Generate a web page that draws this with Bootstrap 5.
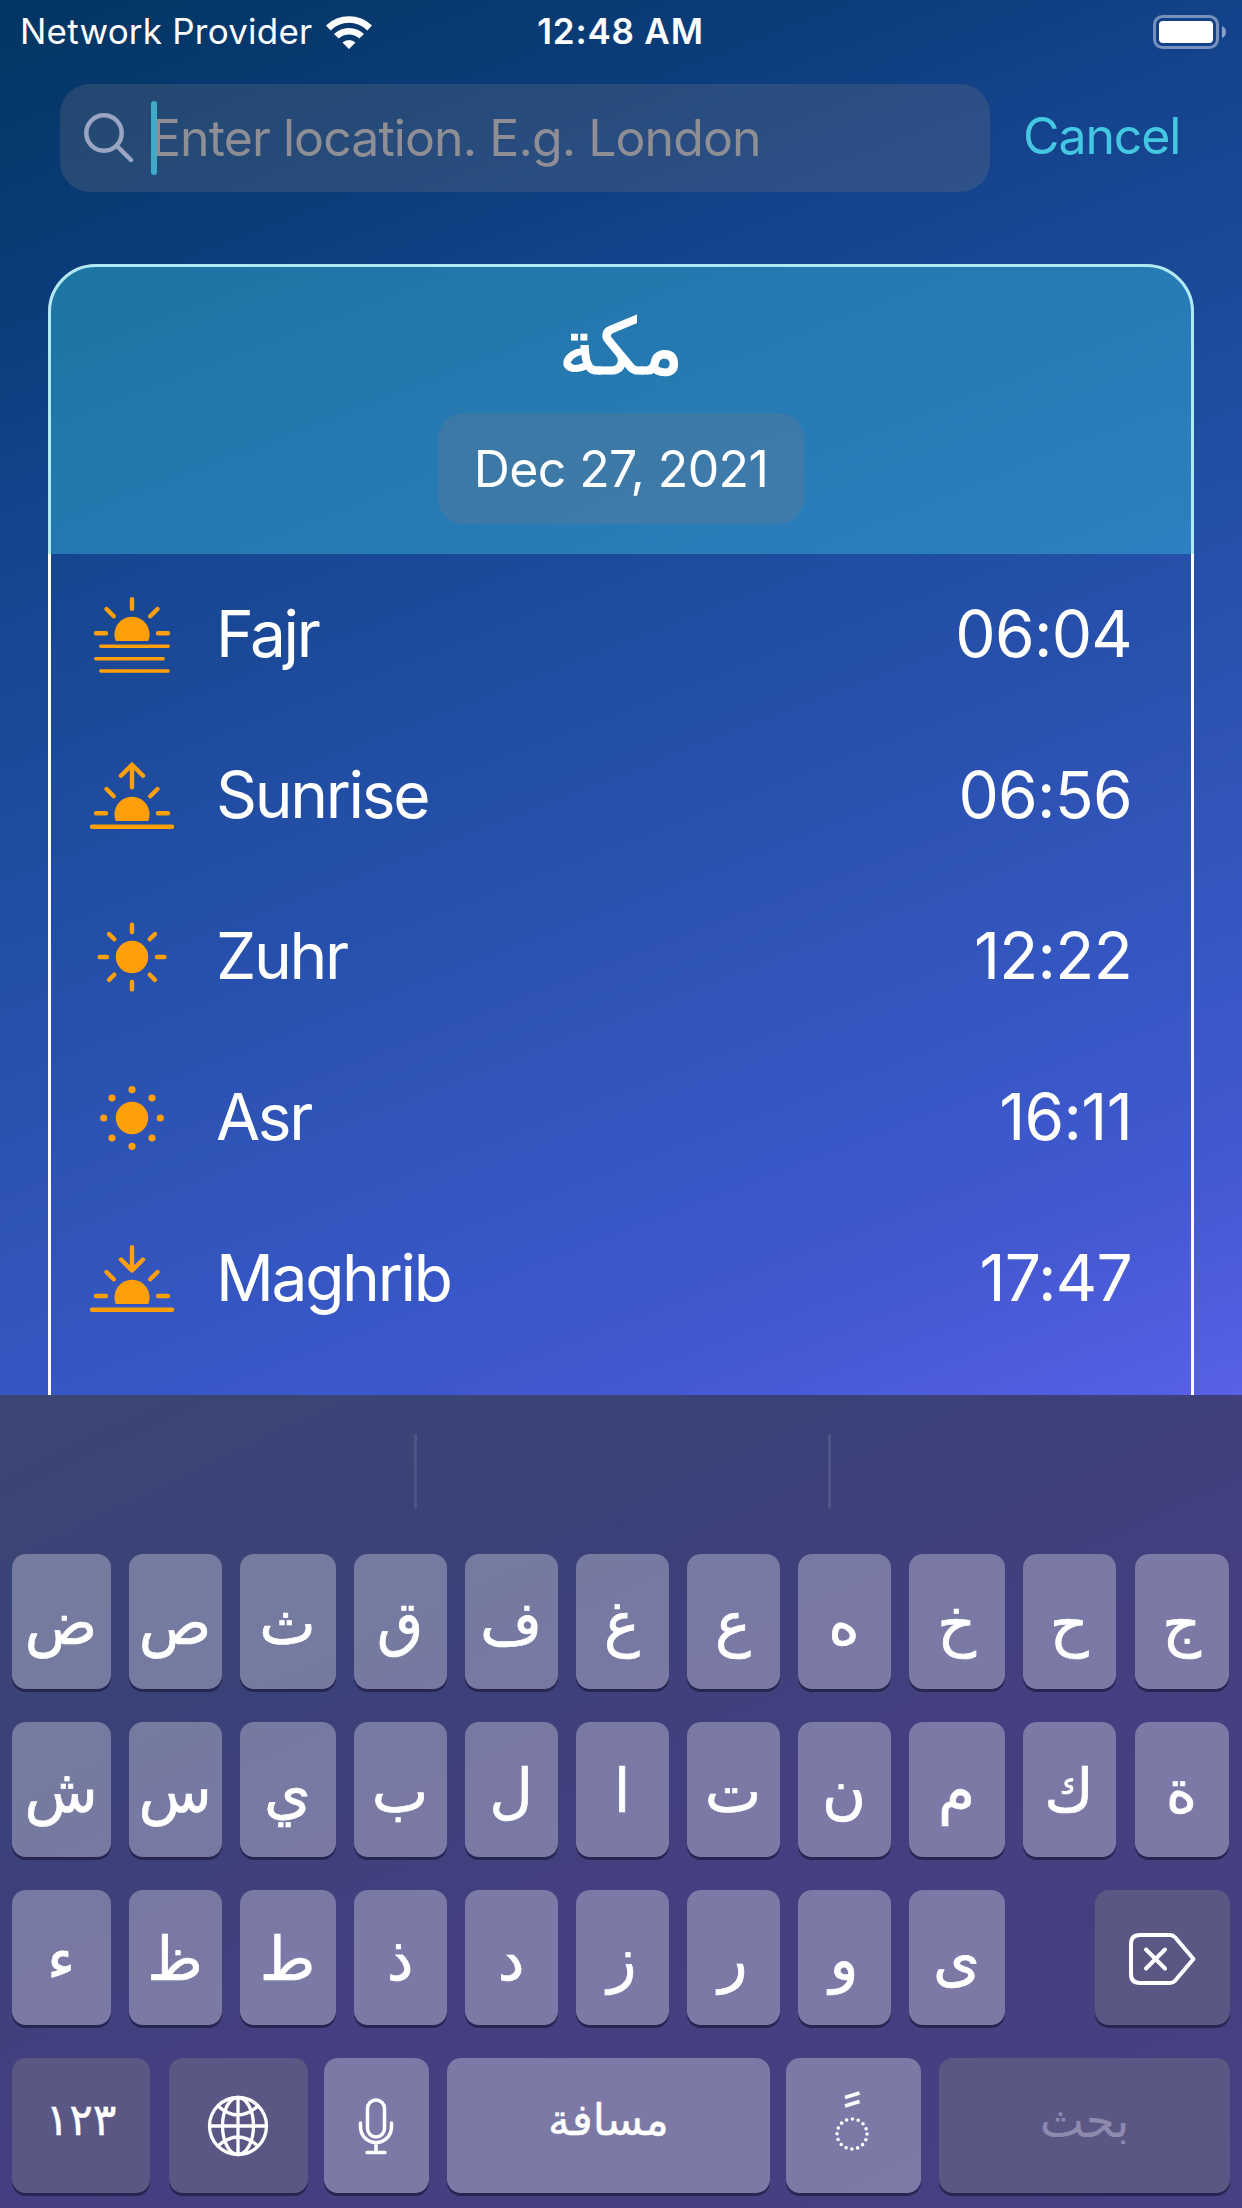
<!DOCTYPE html>
<html lang="en">
<head>
<meta charset="utf-8">
<meta name="viewport" content="width=device-width, initial-scale=1">
<title>Prayer times</title>
<link rel="stylesheet" href="https://cdn.jsdelivr.net/npm/bootstrap@5.3.0/dist/css/bootstrap.min.css">
<style>
  body { font-family: Inter, "DejaVu Sans", sans-serif; color: #fff; background: #463f80; }
  .phone { width: 1242px; height: 2208px; line-height: 1; }
  .app { height: 1395px; background: linear-gradient(159deg, #033562 0, #0c3d7c 320px, #14438c 480px, #1c4a9a 720px, #2650ab 970px, #3054b8 1170px, #3757c5 1340px, #4158ce 1510px, #5a61ea 1765px); }

  .status { height: 84px; padding: 0 15px 0 20px; }
  .status > * { flex: 1 1 0; height: 63px; }
  .carrier { font-size: 35px; letter-spacing: .22px; gap: 14px; }
  .clock { font-size: 35px; font-weight: 600; letter-spacing: .8px; padding-right: 6px; }

  .search-row { padding-left: 60px; }
  .search-box { width: 930px; height: 108px; border-radius: 30px; background: rgba(118,118,128,.26); padding-left: 24px; }
  .caret { width: 6px; height: 74px; border-radius: 3px; background: #3fabc8; margin-left: 17px; margin-right: -6px; z-index: 1; }
  .hint { color: #8f8e95; font-size: 50px; letter-spacing: -.93px; }
  .cancel { color: #44c8e2; font-size: 50px; letter-spacing: -1.1px; margin-left: 33px; margin-top: -4px; }

  .times { width: 1146px; height: 1300px; margin: 72px 0 0 48px; border: 3px solid #fff; border-radius: 48px 48px 0 0; }
  .times-head { margin: -3px -3px 0; height: 290px; border-radius: 48px 48px 0 0; background: rgba(60,200,225,.4); }
  .city { font: 500 77px/1 "DejaVu Sans", sans-serif; height: 149px; padding-top: 45px; -webkit-text-stroke: 1.2px #fff; }
  .date-pill { width: 366px; height: 111px; border-radius: 26px; background: rgba(142,118,128,.22); font-size: 50px; letter-spacing: -.6px; }
  .time-row { height: 161px; padding: 0 59px 2px 36px; font-size: 64px; letter-spacing: -.7px; }
  .time-name { letter-spacing: -2.3px; }
  .time-row svg { width: 90px; height: 160px; margin-right: 39px; fill: #ff9f0a; stroke: #ff9f0a; stroke-width: 4.4; stroke-linecap: round; stroke-linejoin: round; }
  .time-row .disc { stroke: none; }
  .haze { stroke-width: 3.4; }
  .arrow { fill: none; }

  .keyboard { height: 813px; background: linear-gradient(155deg, #3b4674 0, #3a4178 30%, #443f80 55%, #474082 100%); padding: 0 12px; font-family: "DejaVu Sans", sans-serif; }
  .suggest { height: 159px; padding: 39px 0 0; }
  .suggest i { width: 3px; height: 75px; border-radius: 2px; background: rgba(255,255,255,.1); }
  .suggest i:first-child { margin-left: 402px; margin-right: 411px; }
  .key-row { gap: 18px; margin-bottom: 33px; height: 135px; }
  .cap { height: 135px; border-radius: 14px; background: rgba(255,255,255,.3); box-shadow: 0 3px 0 #262650; font-size: 60px; padding: 2px 1px 0 0; flex: none; width: 93px; -webkit-text-stroke: .7px #fff; }
  .w99 { width: 99px; } .w96 { width: 96px; } .w94 { width: 94px; margin-left: 1px; }
  .cap.fn { background: #5a5785; }
  .cap.tall { padding: 0 1px 0 0; }
  .cap svg { fill: none; stroke: #fff; stroke-linecap: round; stroke-linejoin: round; }
  .cap.word { font-size: 44px; padding: 0 0 11px; -webkit-text-stroke-width: .4px; }
  .cap.dim { color: #8d8aad; font-size: 47px; -webkit-text-stroke: 0; }
</style>
</head>
<body>
<div class="phone d-flex flex-column overflow-hidden">
  <main class="app overflow-hidden flex-shrink-0">
    <div class="status d-flex">
      <div class="carrier d-flex align-items-center text-nowrap"><span>Network Provider</span>
        <svg width="46" height="34" viewBox="0 0 46 34"><path fill="#fff" d="M23 34l6.500-6.500a9.500 9.500 0 0 0-13 0zM8 19l4.800 4.600a14.500 14.500 0 0 1 20.400 0L38 19a21.500 21.500 0 0 0-30 0zM0 10.500l4.700 4.900a26 26 0 0 1 36.600 0L46 10.500a33 33 0 0 0-46 0z"/></svg>
      </div>
      <div class="clock d-flex align-items-center justify-content-center text-nowrap">12:48 AM</div>
      <div class="d-flex align-items-center justify-content-end">
        <svg width="75" height="36" viewBox="0 0 75 36"><rect x="2.500" y="2.500" width="63" height="31" rx="8" fill="none" stroke="#fff" stroke-opacity=".42" stroke-width="3"/><rect x="7" y="7" width="54" height="22" rx="4" fill="#fff"/><path d="M70 12q4 2 4 6t-4 6z" fill="#fff" opacity=".5"/></svg>
      </div>
    </div>

    <div class="search-row d-flex align-items-center">
      <div class="search-box d-flex align-items-center">
        <svg width="50" height="50" viewBox="0 0 50 50" fill="none" stroke="#9aa5c4" stroke-width="4.500" stroke-linecap="round"><circle cx="20" cy="20" r="17.700"/><path d="M33 33l14 14"/></svg>
        <span class="caret"></span>
        <span class="hint text-nowrap">Enter location. E.g. London</span>
      </div>
      <span class="cancel">Cancel</span>
    </div>

    <section class="times">
      <div class="times-head d-flex flex-column align-items-center">
        <div class="city" lang="ar" dir="rtl">مكة</div>
        <div class="date-pill d-flex align-items-center justify-content-center text-nowrap">Dec 27, 2021</div>
      </div>
      <div class="time-row d-flex align-items-center">
        <svg viewBox="-45 -80 90 160"><path d="M0-34.800v9.600M-25.500-25l7.300 7.300M25.500-25l-7.300 7.300M-36-.7h10M26-.7h10"/><path class="disc" d="M-16.300 7a17.600 17.600 0 1 1 32.600 0z"/><path class="haze" d="M-31.200 12.300h67.400M-36.200 24.700h67.400M-31.200 37h67.400"/></svg>
        <span class="time-name">Fajr</span><span class="ms-auto">06:04</span>
      </div>
      <div class="time-row d-flex align-items-center">
        <svg viewBox="-45 -80 90 160"><path class="arrow" d="M0-30.300v22.500M-11-19.300l11-11 11 11"/><path d="M-25.500-6l7.300 7.300M25.500-6l-7.300 7.300M-36 18.300h10M26 18.300h10M-40 31.700h80"/><path class="disc" d="M-16.300 26a17.600 17.600 0 1 1 32.600 0z"/></svg>
        <span class="time-name">Sunrise</span><span class="ms-auto">06:56</span>
      </div>
      <div class="time-row d-flex align-items-center">
        <svg viewBox="-45 -81 90 160"><circle class="disc" r="16.200"/><path d="M0-32.400v7.400M0 32.400v-7.400M-32.400 0h7.400M32.400 0h-7.400M-22.900-22.900l5.200 5.200M22.900-22.900l-5.200 5.200M-22.900 22.900l5.200-5.200M22.900 22.900l-5.200-5.200"/></svg>
        <span class="time-name">Zuhr</span><span class="ms-auto">12:22</span>
      </div>
      <div class="time-row d-flex align-items-center">
        <svg viewBox="-45 -81 90 160"><g class="disc"><circle r="16.200"/><circle cy="-28.300" r="3.600"/><circle cy="28.300" r="3.600"/><circle cx="-28.300" r="3.600"/><circle cx="28.300" r="3.600"/><circle cx="-20" cy="-20" r="3.600"/><circle cx="20" cy="-20" r="3.600"/><circle cx="-20" cy="20" r="3.600"/><circle cx="20" cy="20" r="3.600"/></g></svg>
        <span class="time-name">Asr</span><span class="ms-auto">16:11</span>
      </div>
      <div class="time-row d-flex align-items-center">
        <svg viewBox="-45 -80 90 160"><path class="arrow" d="M0-30.700v22.700M-11-18.500l11 11 11-11"/><path d="M-25.500-6l7.300 7.300M25.500-6l-7.300 7.300M-36 18h10M26 18h10M-40 31.700h80"/><path class="disc" d="M-16.300 26a17.600 17.600 0 1 1 32.600 0z"/></svg>
        <span class="time-name">Maghrib</span><span class="ms-auto">17:47</span>
      </div>
    </section>
  </main>

  <section class="keyboard flex-shrink-0" lang="ar">
    <div class="suggest d-flex"><i></i><i></i></div>
    <div class="key-row d-flex">
      <div class="cap w99 d-flex align-items-center justify-content-center">ض</div>
      <div class="cap d-flex align-items-center justify-content-center">ص</div>
      <div class="cap w96 d-flex align-items-center justify-content-center">ث</div>
      <div class="cap d-flex align-items-center justify-content-center">ق</div>
      <div class="cap d-flex align-items-center justify-content-center">ف</div>
      <div class="cap d-flex align-items-center justify-content-center">غ</div>
      <div class="cap d-flex align-items-center justify-content-center">ع</div>
      <div class="cap d-flex align-items-center justify-content-center">ه</div>
      <div class="cap w96 d-flex align-items-center justify-content-center">خ</div>
      <div class="cap d-flex align-items-center justify-content-center">ح</div>
      <div class="cap w94 d-flex align-items-center justify-content-center">ج</div>
    </div>
    <div class="key-row d-flex">
      <div class="cap w99 d-flex align-items-center justify-content-center">ش</div>
      <div class="cap d-flex align-items-center justify-content-center">س</div>
      <div class="cap w96 d-flex align-items-center justify-content-center">ي</div>
      <div class="cap d-flex align-items-center justify-content-center">ب</div>
      <div class="cap d-flex align-items-center justify-content-center">ل</div>
      <div class="cap d-flex align-items-center justify-content-center">ا</div>
      <div class="cap d-flex align-items-center justify-content-center">ت</div>
      <div class="cap d-flex align-items-center justify-content-center">ن</div>
      <div class="cap w96 d-flex align-items-center justify-content-center">م</div>
      <div class="cap d-flex align-items-center justify-content-center">ك</div>
      <div class="cap w94 d-flex align-items-center justify-content-center">ة</div>
    </div>
    <div class="key-row d-flex">
      <div class="cap w99 d-flex align-items-center justify-content-center">ء</div>
      <div class="cap d-flex align-items-center justify-content-center">ظ</div>
      <div class="cap w96 d-flex align-items-center justify-content-center">ط</div>
      <div class="cap d-flex align-items-center justify-content-center">ذ</div>
      <div class="cap d-flex align-items-center justify-content-center">د</div>
      <div class="cap d-flex align-items-center justify-content-center">ز</div>
      <div class="cap d-flex align-items-center justify-content-center">ر</div>
      <div class="cap d-flex align-items-center justify-content-center">و</div>
      <div class="cap w96 d-flex align-items-center justify-content-center">ى</div>
      <div class="cap fn tall d-flex align-items-center justify-content-center ms-auto" style="width:135px">
        <svg width="70" height="54" viewBox="0 0 70 54" stroke-width="4"><path d="M13 4h30q3 0 5 2.300L66.500 28 48 49.700q-2 2.300-5 2.300H13q-9 0-9-9V13q0-9 9-9z"/><path d="M19 18.500L38 37.500M38 18.500L19 37.500"/></svg>
      </div>
    </div>
    <div class="key-row d-flex gap-0">
      <div class="cap fn word d-flex align-items-center justify-content-center" style="width:138px">١٢٣</div>
      <div class="cap fn tall d-flex align-items-center justify-content-center" style="width:139px;margin-left:19px">
        <svg width="62" height="62" viewBox="-31 -31 62 62" stroke-width="3.300"><circle r="28.500"/><ellipse rx="15.500" ry="28.500"/><path d="M0-28.500v57M-28.500 0h57M-20-20Q0-2 20-20M-20 20Q0 2 20 20"/></svg>
      </div>
      <div class="cap tall d-flex align-items-center justify-content-center" style="width:105px;margin-left:16px">
        <svg width="36" height="58" viewBox="0 0 36 58" stroke-width="3.500"><rect x="9.500" y="3" width="17" height="37" rx="8.500"/><path d="M2.500 26v4a15.500 15.500 0 0 0 31 0v-4M18 45.500v10M9 55.500h18"/></svg>
      </div>
      <div class="cap word d-flex align-items-center justify-content-center" style="width:323px;margin-left:18px">مسافة</div>
      <div class="cap tall d-flex align-items-center justify-content-center" style="width:135px;margin-left:16px">
        <svg width="50" height="74" viewBox="-25 -37 50 74"><circle cx="-1" cy="8" r="15" stroke-width="3.600" stroke-dasharray="0 5.890"/><path d="M-8-28.500l14.500-4.500M-8-20l14.500-4.500" stroke-width="3.600" stroke-linecap="butt"/></svg>
      </div>
      <div class="cap fn word dim d-flex align-items-center justify-content-center" style="width:291px;margin-left:18px">بحث</div>
    </div>
  </section>
</div>
<script src="https://cdn.jsdelivr.net/npm/bootstrap@5.3.0/dist/js/bootstrap.bundle.min.js"></script>
</body>
</html>
